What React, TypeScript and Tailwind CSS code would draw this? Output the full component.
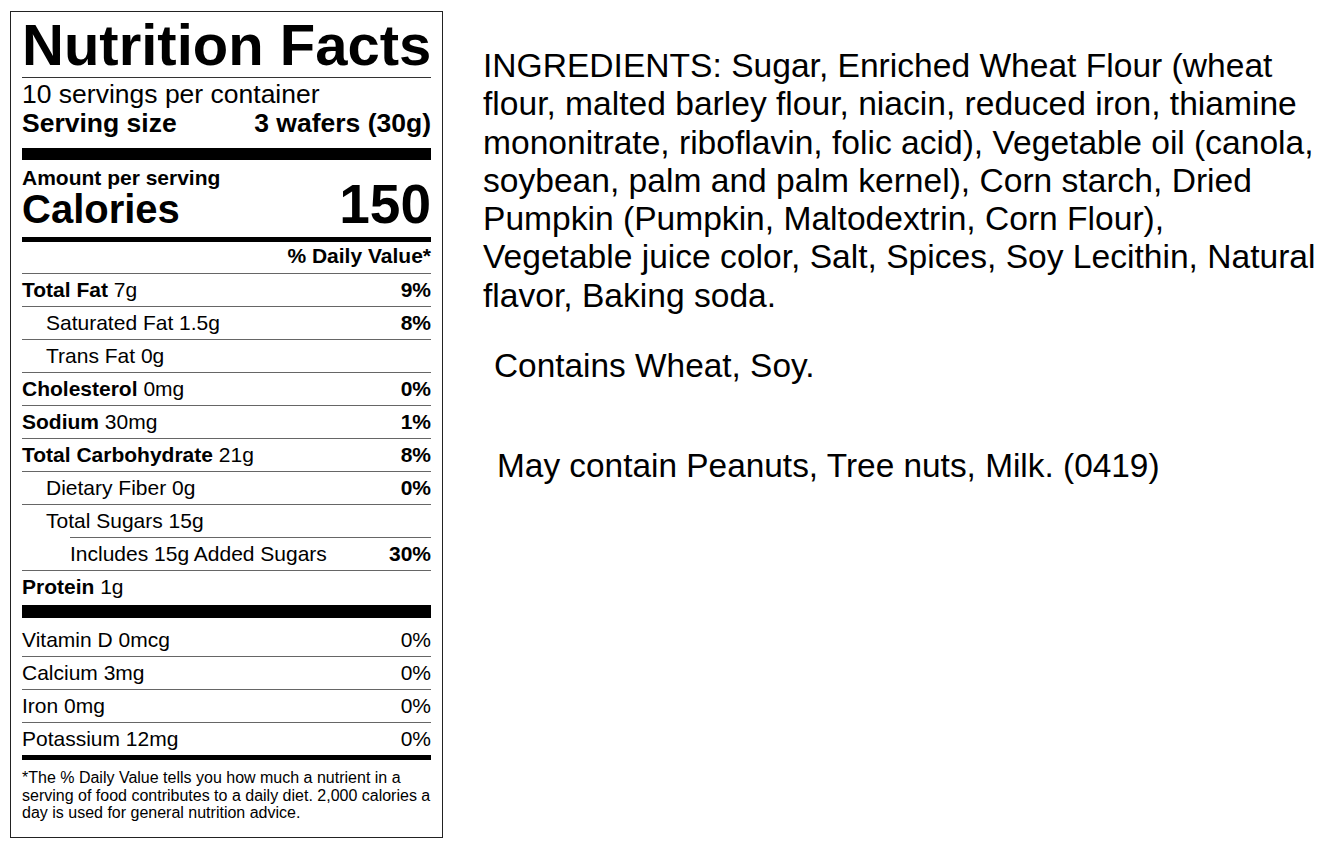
import React from "react";

type Row = {
  label: string;
  amount: string;
  dv?: string;
  bold?: boolean;
  indent?: 0 | 1 | 2;
};

const rows: Row[] = [
  { label: "Total Fat", amount: "7g", dv: "9%", bold: true },
  { label: "Saturated Fat", amount: "1.5g", dv: "8%", indent: 1 },
  { label: "Trans Fat", amount: "0g", indent: 1 },
  { label: "Cholesterol", amount: "0mg", dv: "0%", bold: true },
  { label: "Sodium", amount: "30mg", dv: "1%", bold: true },
  { label: "Total Carbohydrate", amount: "21g", dv: "8%", bold: true },
  { label: "Dietary Fiber", amount: "0g", dv: "0%", indent: 1 },
  { label: "Total Sugars", amount: "15g", indent: 1 },
];

const vitamins = [
  { label: "Vitamin D 0mcg", dv: "0%" },
  { label: "Calcium 3mg", dv: "0%" },
  { label: "Iron 0mg", dv: "0%" },
  { label: "Potassium 12mg", dv: "0%" },
];

const NutrientRow: React.FC<{ row: Row }> = ({ row }) => (
  <div className="h-[33px] border-t border-[#666] flex justify-between leading-[32px]">
    <span className={row.indent === 1 ? "pl-[24px]" : ""}>
      {row.bold ? <b>{row.label}</b> : row.label} {row.amount}
    </span>
    {row.dv && <b>{row.dv}</b>}
  </div>
);

const Label: React.FC = () => (
  <div className="w-[433px] shrink-0 border border-[#222] px-[11px] pb-[15px] text-black">
    {/* Header */}
    <h1 className="text-[58px] font-bold leading-[65px] whitespace-nowrap">
      Nutrition Facts
    </h1>
    <div className="border-t border-[#333] pt-[2px] text-[26.5px]">
      <div className="leading-[29px] whitespace-nowrap">10 servings per container</div>
      <div className="leading-[29px] flex justify-between font-bold whitespace-nowrap">
        <span>Serving size</span>
        <span>3 wafers (30g)</span>
      </div>
    </div>
    <div className="mt-[10px] h-[12px] bg-black" />

    {/* Calories */}
    <div className="pt-[6px] text-[21px] font-bold leading-[24px]">Amount per serving</div>
    <div className="h-[47px] flex justify-between items-baseline font-bold">
      <span className="text-[40px] leading-[28px]">Calories</span>
      <span className="text-[55px] leading-[28px]">150</span>
    </div>
    <div className="h-[5px] bg-black" />
    <div className="h-[31px] text-right text-[21px] font-bold leading-[28px]">% Daily Value*</div>

    {/* Nutrients */}
    <div className="text-[21px]">
      {rows.map((r) => (
        <NutrientRow key={r.label} row={r} />
      ))}
      <div className="h-[33px] pl-[48px]">
        <div className="h-full border-t border-[#666] flex justify-between leading-[32px]">
          <span>Includes 15g Added Sugars</span>
          <b>30%</b>
        </div>
      </div>
      <div className="h-[35px] border-t border-[#666] leading-[32px]">
        <b>Protein</b> 1g
      </div>
    </div>
    <div className="h-[13px] bg-black" />

    {/* Vitamins & minerals */}
    <div className="text-[21px]">
      {vitamins.map((v, i) => (
        <div
          key={v.label}
          className={
            i === 0
              ? "h-[38px] pt-[6px] flex justify-between leading-[32px]"
              : "h-[33px] border-t border-[#666] flex justify-between leading-[32px]"
          }
        >
          <span>{v.label}</span>
          <span>{v.dv}</span>
        </div>
      ))}
    </div>
    <div className="h-[5px] bg-black" />

    <p className="pt-[9px] text-[16px] leading-[17.5px] whitespace-nowrap">
      *The % Daily Value tells you how much a nutrient in a
      <br />
      serving of food contributes to a daily diet. 2,000 calories a
      <br />
      day is used for general nutrition advice.
    </p>
  </div>
);

export default function App() {
  return (
    <div
      className="min-h-screen bg-white flex items-start pl-[10px] pt-[11px]"
      style={{ fontFamily: '"Liberation Sans", Arial, sans-serif' }}
    >
      <Label />

      <div className="ml-[40px] mt-[36px] text-black">
        <p className="text-[33.6px] leading-[38.3px] whitespace-nowrap">
          INGREDIENTS: Sugar, Enriched Wheat Flour (wheat
          <br />
          flour, malted barley flour, niacin, reduced iron, thiamine
          <br />
          mononitrate, riboflavin, folic acid), Vegetable oil (canola,
          <br />
          soybean, palm and palm kernel), Corn starch, Dried
          <br />
          Pumpkin (Pumpkin, Maltodextrin, Corn Flour),
          <br />
          Vegetable juice color, Salt, Spices, Soy Lecithin, Natural
          <br />
          flavor, Baking soda.
        </p>
        <p className="mt-[32px] ml-[11px] text-[33.4px] leading-[38px] whitespace-nowrap">
          Contains Wheat, Soy.
        </p>
        <p className="mt-[62px] ml-[14px] text-[33.4px] leading-[38px] whitespace-nowrap">
          May contain Peanuts, Tree nuts, Milk. (0419)
        </p>
      </div>
    </div>
  );
}
